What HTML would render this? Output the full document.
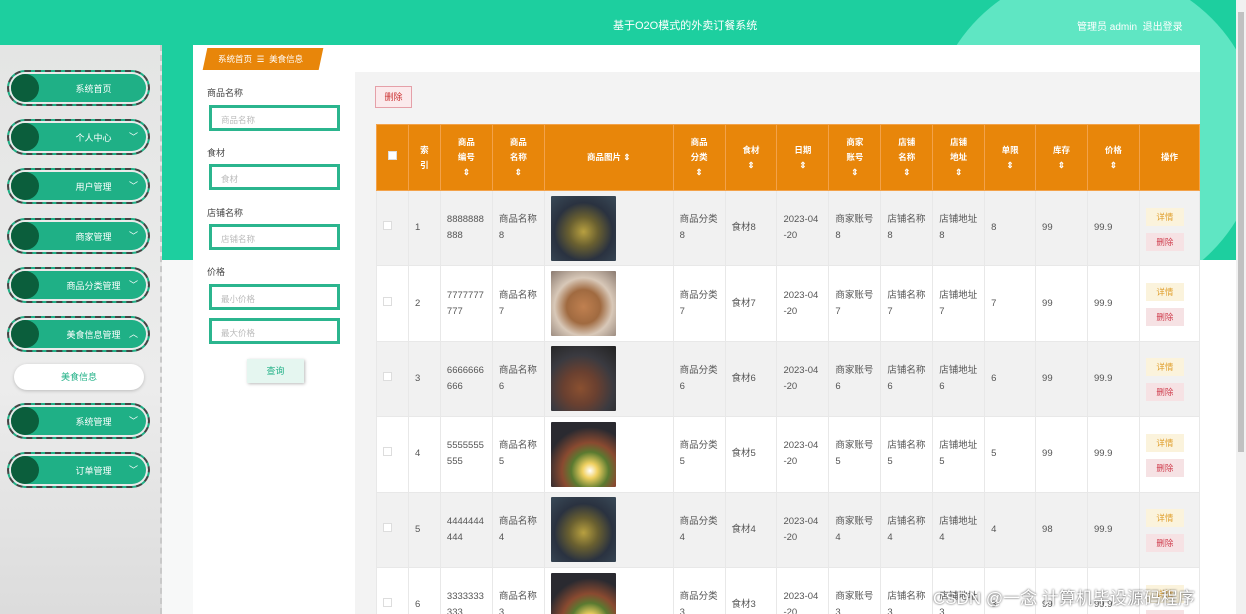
<!DOCTYPE html>
<html style="overflow:hidden;height:614px"><head><meta charset="utf-8">
<style>
*{margin:0;padding:0;box-sizing:border-box}
body{width:1246px;height:614px;overflow:hidden;position:relative;background:#f7f8f8;font-family:"Liberation Sans","Noto Sans CJK SC",sans-serif;font-size:10px;color:#555}
.abs{position:absolute}
.top{left:0;top:0;width:1246px;height:260px;background:#1dcf9f}
.circ{left:930px;top:-30px;width:330px;height:330px;border-radius:50%;background:#5fe6c3}
.title{top:17px;color:#fff;font-size:11px}
.user{left:1077px;top:18px;color:#fff;font-size:10px}
.side{left:0;top:45px;width:162px;height:569px;background:linear-gradient(#e4e5e4,#ececec 60%,#dcdcdc);border-right:2px dashed #c9c9c9}
.nav{left:7px;width:143px;height:36px;border:2px dashed #444;border-radius:18px;background:#1fb086;box-shadow:inset 0 0 0 2px #eaeaea}
.nav .dot{position:absolute;left:2px;top:2px;width:28px;height:28px;border-radius:50%;background:#0b5e3c}
.nav span{position:absolute;left:30px;right:0;top:10px;text-align:center;color:#fff;font-size:9px}
.nav i{position:absolute;right:10px;top:9px;color:#fff;font-style:normal;font-size:9px}
.sub{left:14px;top:364px;width:130px;height:26px;border-radius:13px;background:#fff;box-shadow:0 1px 3px #bbb;text-align:center;line-height:26px;color:#1fb086;font-size:9px}
.panel{left:193px;top:45px;width:1007px;height:569px;background:#fff}
.crumb{left:205px;top:48px;width:116px;height:22px;background:#e8860a;transform:skewX(-12deg)}
.crumbt{left:218px;top:53px;color:#fff;font-size:8.5px}
.area{left:355px;top:72px;width:845px;height:542px;background:#f3f3f3}
.lbl{left:207px;font-size:9px;color:#444}
.inp{left:209px;width:131px;height:26px;border:3px solid #2bb58e;background:#fff;color:#bbb;font-size:8.5px;padding:6px 0 0 9px}
.qbtn{left:247px;top:359px;width:57px;height:24px;background:#e5f6f0;box-shadow:1px 1px 3px #bbb;color:#1fb086;text-align:center;line-height:24px;font-size:9px}
.del{left:375px;top:86px;width:37px;height:22px;border:1px solid #e5a0a8;background:#fbeaec;color:#c33;text-align:center;line-height:20px;font-size:9px}
table{position:absolute;left:376px;top:124px;border-collapse:collapse;width:824px}
th{background:#e8860a;color:#fff;font-size:8.5px;font-weight:bold;height:66px;border:1px solid #f3a24a;text-align:center;line-height:15px}
td{height:75.4px;border:1px solid #e8e8e8;font-size:9.5px;color:#555;padding-left:6px;line-height:16px}
tr.o td{background:#f1f1f1}tr.e td{background:#fff}
.cb{width:9px;height:9px;background:#fff;border:1px solid #ddd;display:inline-block}
.img{width:65px;height:65px;display:block;border-radius:1px}
.b1{display:block;width:38px;height:18px;background:#fbf3dc;color:#e0a030;text-align:center;line-height:18px;font-size:8.5px;margin:2px 0 7px}
.b2{display:block;width:38px;height:18px;background:#f6e2e4;color:#d04050;text-align:center;line-height:18px;font-size:8.5px}
.sb{left:1236px;top:0;width:10px;height:614px;background:#f1f1f1}
.sbt{left:1238px;top:12px;width:6px;height:440px;background:#c1c1c1}
.wm{left:933px;top:584px;color:#fff;font-size:17px;text-shadow:0 0 2px #333}
</style></head><body>
<div class="abs top"></div>
<div class="abs circ"></div>
<div class="abs title" style="left:613px">基于O2O模式的外卖订餐系统</div>
<div class="abs user">管理员 admin &nbsp;退出登录</div>
<div class="abs" style="left:1200px;top:260px;width:36px;height:354px;background:#fff"></div>
<div class="abs side"></div>
<div class="abs nav" style="top:70px"><div class="dot"></div><span>系统首页</span></div>
<div class="abs nav" style="top:119px"><div class="dot"></div><span>个人中心</span><i>﹀</i></div>
<div class="abs nav" style="top:168px"><div class="dot"></div><span>用户管理</span><i>﹀</i></div>
<div class="abs nav" style="top:218px"><div class="dot"></div><span>商家管理</span><i>﹀</i></div>
<div class="abs nav" style="top:267px"><div class="dot"></div><span>商品分类管理</span><i>﹀</i></div>
<div class="abs nav" style="top:316px"><div class="dot"></div><span>美食信息管理</span><i>︿</i></div>
<div class="abs sub">美食信息</div>
<div class="abs nav" style="top:403px"><div class="dot"></div><span>系统管理</span><i>﹀</i></div>
<div class="abs nav" style="top:452px"><div class="dot"></div><span>订单管理</span><i>﹀</i></div>
<div class="abs panel"></div>
<div class="abs crumb"></div>
<div class="abs crumbt">系统首页 &nbsp;☰ &nbsp;美食信息</div>
<div class="abs area"></div>
<div class="abs lbl" style="top:86px">商品名称</div>
<div class="abs inp" style="top:105px">商品名称</div>
<div class="abs lbl" style="top:146px">食材</div>
<div class="abs inp" style="top:164px">食材</div>
<div class="abs lbl" style="top:206px">店铺名称</div>
<div class="abs inp" style="top:224px">店铺名称</div>
<div class="abs lbl" style="top:265px">价格</div>
<div class="abs inp" style="top:284px">最小价格</div>
<div class="abs inp" style="top:318px">最大价格</div>
<div class="abs qbtn">查询</div>
<div class="abs del">删除</div>
<table>
<colgroup><col style="width:32px"><col style="width:32px"><col style="width:52px"><col style="width:52px"><col style="width:129px"><col style="width:52px"><col style="width:52px"><col style="width:52px"><col style="width:52px"><col style="width:52px"><col style="width:52px"><col style="width:51px"><col style="width:52px"><col style="width:52px"><col style="width:60px"></colgroup>
<tr><th><span class="cb"></span></th><th>索<br>引</th><th>商品<br>编号<br>⇕</th><th>商品<br>名称<br>⇕</th><th>商品图片 ⇕</th><th>商品<br>分类<br>⇕</th><th>食材<br>⇕</th><th>日期<br>⇕</th><th>商家<br>账号<br>⇕</th><th>店铺<br>名称<br>⇕</th><th>店铺<br>地址<br>⇕</th><th>单限<br>⇕</th><th>库存<br>⇕</th><th>价格<br>⇕</th><th>操作</th></tr>
<tr class="o"><td><span class="cb"></span></td><td>1</td><td>8888888<br>888</td><td>商品名称<br>8</td><td><div class="img" style="background:radial-gradient(circle at 50% 55%,#b8a040 0,#6a6030 30%,#2a3240 60%,#3a4a58)"></div></td><td>商品分类<br>8</td><td>食材8</td><td>2023-04<br>-20</td><td>商家账号<br>8</td><td>店铺名称<br>8</td><td>店铺地址<br>8</td><td>8</td><td>99</td><td>99.9</td><td><span class="b1">详情</span><span class="b2">删除</span></td></tr>
<tr class="e"><td><span class="cb"></span></td><td>2</td><td>7777777<br>777</td><td>商品名称<br>7</td><td><div class="img" style="background:radial-gradient(circle at 50% 55%,#c08050 0,#a06a40 35%,#d8c8b8 60%,#8a7a70)"></div></td><td>商品分类<br>7</td><td>食材7</td><td>2023-04<br>-20</td><td>商家账号<br>7</td><td>店铺名称<br>7</td><td>店铺地址<br>7</td><td>7</td><td>99</td><td>99.9</td><td><span class="b1">详情</span><span class="b2">删除</span></td></tr>
<tr class="o"><td><span class="cb"></span></td><td>3</td><td>6666666<br>666</td><td>商品名称<br>6</td><td><div class="img" style="background:radial-gradient(circle at 45% 65%,#8a5030 0,#6a4030 30%,#3a3a40 60%,#222)"></div></td><td>商品分类<br>6</td><td>食材6</td><td>2023-04<br>-20</td><td>商家账号<br>6</td><td>店铺名称<br>6</td><td>店铺地址<br>6</td><td>6</td><td>99</td><td>99.9</td><td><span class="b1">详情</span><span class="b2">删除</span></td></tr>
<tr class="e"><td><span class="cb"></span></td><td>4</td><td>5555555<br>555</td><td>商品名称<br>5</td><td><div class="img" style="background:radial-gradient(circle at 60% 75%,#fff 0,#f0d060 12%,#5a7a30 30%,#8a4a30 45%,#2a2a30 70%)"></div></td><td>商品分类<br>5</td><td>食材5</td><td>2023-04<br>-20</td><td>商家账号<br>5</td><td>店铺名称<br>5</td><td>店铺地址<br>5</td><td>5</td><td>99</td><td>99.9</td><td><span class="b1">详情</span><span class="b2">删除</span></td></tr>
<tr class="o"><td><span class="cb"></span></td><td>5</td><td>4444444<br>444</td><td>商品名称<br>4</td><td><div class="img" style="background:radial-gradient(circle at 50% 55%,#b8a040 0,#6a6030 30%,#2a3240 60%,#3a4a58)"></div></td><td>商品分类<br>4</td><td>食材4</td><td>2023-04<br>-20</td><td>商家账号<br>4</td><td>店铺名称<br>4</td><td>店铺地址<br>4</td><td>4</td><td>98</td><td>99.9</td><td><span class="b1">详情</span><span class="b2">删除</span></td></tr>
<tr class="e"><td><span class="cb"></span></td><td>6</td><td>3333333<br>333</td><td>商品名称<br>3</td><td><div class="img" style="background:radial-gradient(circle at 60% 75%,#fff 0,#f0d060 12%,#5a7a30 30%,#8a4a30 45%,#2a2a30 70%)"></div></td><td>商品分类<br>3</td><td>食材3</td><td>2023-04<br>-20</td><td>商家账号<br>3</td><td>店铺名称<br>3</td><td>店铺地址<br>3</td><td>3</td><td>99</td><td>99.9</td><td><span class="b1">详情</span><span class="b2">删除</span></td></tr>
</table>
<div class="abs sb"></div>
<div class="abs sbt"></div>
<div class="abs wm">CSDN @一念 计算机毕设源码程序</div>
</body></html>
